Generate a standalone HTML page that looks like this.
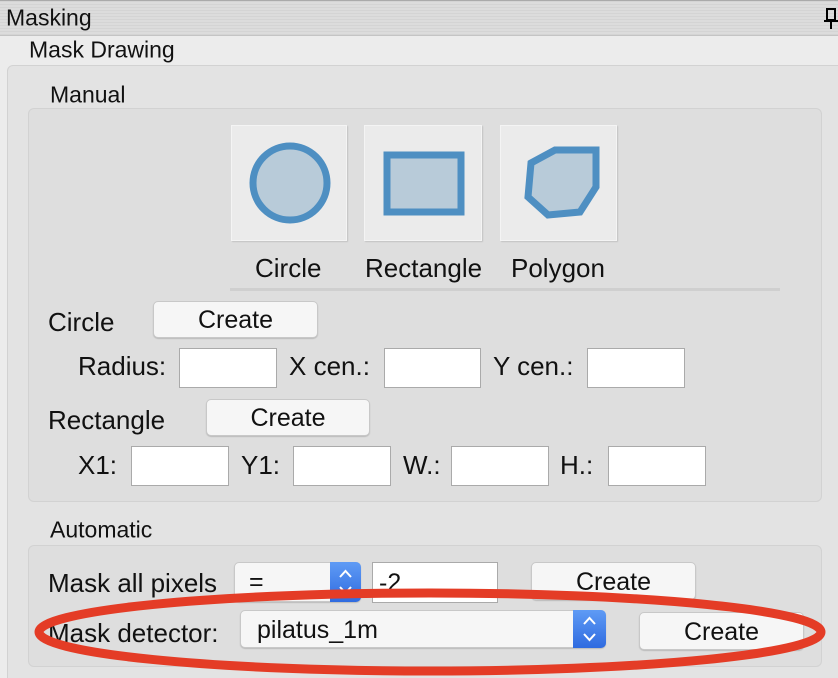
<!DOCTYPE html>
<html><head><style>
html,body{margin:0;width:838px;height:678px;overflow:hidden}
body{background:#ececec;font-family:"Liberation Sans",sans-serif;position:relative;color:#111}
.a{position:absolute}
.t{position:absolute;font-size:26px;line-height:1;transform:translateY(-50%);white-space:nowrap}
.box{position:absolute;background:#e1e1e1;border:1px solid #d2d2d2;border-radius:6px}
.btn{position:absolute;background:#f6f6f6;border:1px solid #c8c8c8;border-radius:5px;box-shadow:0 1px 1px #bbb;font-size:25px;text-align:center;box-sizing:border-box;white-space:nowrap}
.inp{position:absolute;background:#fff;border:1px solid #aaa;box-sizing:border-box}
.ib{position:absolute;background:#ebebeb;border:1px solid #f4f4f4;box-shadow:1px 1px 1px #c4c4c4;box-sizing:border-box}
.blue{position:absolute;background:linear-gradient(#5f9bf5,#2f6be0);border-radius:0 5px 5px 0}
</style></head><body>
<div class="a" style="left:0;top:0;width:838px;height:36px;background:repeating-linear-gradient(#d4d4d4 0 1px,#dcdcdc 1px 3px);border-top:1px solid #aaa;border-bottom:1px solid #c4c4c4;box-sizing:border-box"></div>
<div class="t" style="left:6px;top:18px;font-size:23px">Masking</div>
<svg class="a" style="left:824px;top:8px" width="14" height="22"><path d="M3 1h8v11H3z" fill="none" stroke="#000" stroke-width="2"/><path d="M0 13h14M7 13v8" stroke="#000" stroke-width="2"/></svg>
<div class="t" style="left:29px;top:50px;font-size:23px">Mask Drawing</div>
<div class="box" style="left:7px;top:65px;width:840px;height:640px;background:#e3e3e3"></div>
<div class="t" style="left:50px;top:95px;font-size:23px">Manual</div>
<div class="box" style="left:28px;top:108px;width:792px;height:392px;background:#dedede"></div>
<div class="ib" style="left:231px;top:125px;width:116px;height:116px"></div>
<div class="ib" style="left:364px;top:125px;width:118px;height:116px"></div>
<div class="ib" style="left:500px;top:125px;width:117px;height:116px"></div>
<svg class="a" style="left:0;top:0" width="838" height="300">
<circle cx="290" cy="183" r="37" fill="#b8cbd9" stroke="#4e8fc2" stroke-width="7"/>
<rect x="387" y="155" width="74" height="57" fill="#b8cbd9" stroke="#4e8fc2" stroke-width="7"/>
<path d="M531 163L555 150H596V187L580 212L548 215L528 197Z" fill="#b8cbd9" stroke="#4e8fc2" stroke-width="7"/>
</svg>
<div class="t" style="left:255px;top:268px">Circle</div>
<div class="t" style="left:365px;top:268px">Rectangle</div>
<div class="t" style="left:511px;top:268px">Polygon</div>
<div class="a" style="left:230px;top:288px;width:550px;height:3px;background:#cfcfcf"></div>
<div class="t" style="left:48px;top:322px">Circle</div>
<div class="btn" style="left:153px;top:301px;width:165px;height:37px;line-height:36px">Create</div>
<div class="t" style="left:78px;top:366px">Radius:</div>
<div class="inp" style="left:179px;top:348px;width:98px;height:40px"></div>
<div class="t" style="left:289px;top:366px">X cen.:</div>
<div class="inp" style="left:384px;top:348px;width:97px;height:40px"></div>
<div class="t" style="left:493px;top:366px">Y cen.:</div>
<div class="inp" style="left:587px;top:348px;width:98px;height:40px"></div>
<div class="t" style="left:48px;top:420px">Rectangle</div>
<div class="btn" style="left:206px;top:399px;width:164px;height:37px;line-height:36px">Create</div>
<div class="t" style="left:78px;top:465px">X1:</div>
<div class="inp" style="left:131px;top:446px;width:98px;height:40px"></div>
<div class="t" style="left:241px;top:465px">Y1:</div>
<div class="inp" style="left:293px;top:446px;width:98px;height:40px"></div>
<div class="t" style="left:403px;top:465px">W.:</div>
<div class="inp" style="left:451px;top:446px;width:98px;height:40px"></div>
<div class="t" style="left:560px;top:465px">H.:</div>
<div class="inp" style="left:608px;top:446px;width:98px;height:40px"></div>
<div class="t" style="left:50px;top:530px;font-size:23px">Automatic</div>
<div class="box" style="left:28px;top:545px;width:792px;height:120px;background:#dedede"></div>
<div class="t" style="left:48px;top:583px">Mask all pixels</div>
<div class="btn" style="left:234px;top:562px;width:127px;height:40px;text-align:left;padding-left:14px;line-height:38px">=</div>
<div class="blue" style="left:330px;top:562px;width:31px;height:40px"><svg width="31" height="40"><path d="M10 15l5.5-6 5.5 6M10 25l5.5 6 5.5-6" fill="none" stroke="#fff" stroke-width="2"/></svg></div>
<div class="inp" style="left:372px;top:562px;width:126px;height:41px;font-size:25px;padding-left:6px;line-height:40px">-2</div>
<div class="btn" style="left:531px;top:562px;width:165px;height:38px;line-height:38px">Create</div>
<div class="t" style="left:48px;top:633px">Mask detector:</div>
<div class="btn" style="left:240px;top:610px;width:366px;height:38px;text-align:left;padding-left:16px;line-height:38px">pilatus_1m</div>
<div class="blue" style="left:573px;top:610px;width:33px;height:38px"><svg width="33" height="38"><path d="M11 14l5.5-6 5.5 6M11 24l5.5 6 5.5-6" fill="none" stroke="#fff" stroke-width="2"/></svg></div>
<div class="btn" style="left:639px;top:612px;width:165px;height:38px;line-height:38px">Create</div>
<svg class="a" style="left:0;top:0" width="838" height="678"><ellipse cx="430" cy="632" rx="391" ry="39" fill="none" stroke="#e43c26" stroke-width="9"/></svg>
</body></html>
